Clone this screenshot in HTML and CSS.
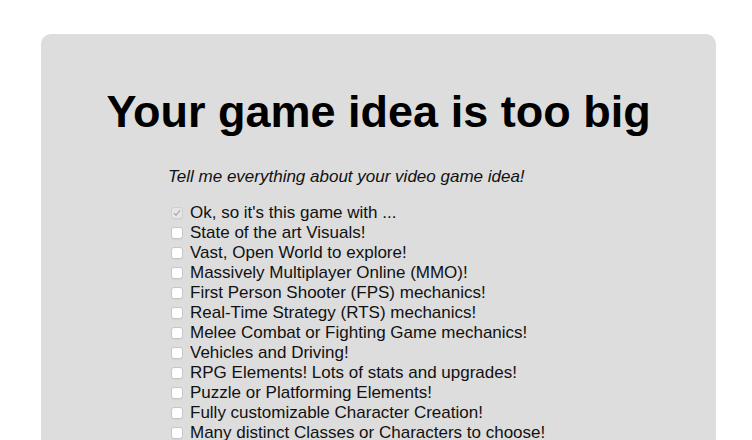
FILE: index.html
```html
<!DOCTYPE html>
<html>
<head>
<meta charset="utf-8">
<link rel="stylesheet" href="styles.css">
</head>
<body>
<div class="card">
  <h1 class="title">Your game idea is too big</h1>
  <div class="form">
    <p class="prompt">Tell me everything about your video game idea!</p>
    <ul class="list">
      <li class="item"><span class="box checked"><svg width="8" height="8" viewBox="0 0 8 8"><path d="M1 4.2 L3 6.4 L7 1.2" fill="none" stroke="#a8a8a8" stroke-width="1.2"/></svg></span>Ok, so it's this game with ...</li>
      <li class="item"><span class="box"></span>State of the art Visuals!</li>
      <li class="item"><span class="box"></span>Vast, Open World to explore!</li>
      <li class="item"><span class="box"></span>Massively Multiplayer Online (MMO)!</li>
      <li class="item"><span class="box"></span>First Person Shooter (FPS) mechanics!</li>
      <li class="item"><span class="box"></span>Real-Time Strategy (RTS) mechanics!</li>
      <li class="item"><span class="box"></span>Melee Combat or Fighting Game mechanics!</li>
      <li class="item"><span class="box"></span>Vehicles and Driving!</li>
      <li class="item"><span class="box"></span>RPG Elements! Lots of stats and upgrades!</li>
      <li class="item"><span class="box"></span>Puzzle or Platforming Elements!</li>
      <li class="item"><span class="box"></span>Fully customizable Character Creation!</li>
      <li class="item"><span class="box"></span>Many distinct Classes or Characters to choose!</li>
    </ul>
  </div>
</div>
</body>
</html>
```
FILE: styles.css
```css
html, body {
  margin: 0;
  padding: 0;
  background: #ffffff;
  font-family: "Liberation Sans", Arial, sans-serif;
  color: #111;
}
body {
  padding: 34px 36px 0 41px;
  overflow: hidden;
  height: 440px;
  box-sizing: border-box;
}
.card {
  width: 675px;
  height: 406px;
  box-sizing: border-box;
  background: #dddddd;
  border-radius: 10px 10px 0 0;
  padding-top: 52px;
  overflow: hidden;
}
.title {
  margin: 0;
  text-align: center;
  font-size: 45px;
  font-weight: bold;
  line-height: 52px;
  color: #000;
}
.form {
  padding-left: 127px;
  padding-top: 29px;
}
.prompt {
  margin: 0 0 16px 0;
  font-style: italic;
  font-size: 17px;
  line-height: 20px;
}
.list {
  list-style: none;
  margin: 0;
  padding: 0;
}
.item {
  display: flex;
  align-items: center;
  height: 20px;
  font-size: 17px;
  line-height: 20px;
}
.box {
  width: 10px;
  height: 10px;
  margin: 0 7px 0 3px;
  background: #fff;
  border: 1px solid #c6c6c6;
  border-radius: 3px;
  box-shadow: 0 1px 0 rgba(0,0,0,0.04);
  display: flex;
  align-items: center;
  justify-content: center;
  flex-shrink: 0;
}
.box.checked {
  background: #e6e6e6;
  border-color: #cfcfcf;
}
```
